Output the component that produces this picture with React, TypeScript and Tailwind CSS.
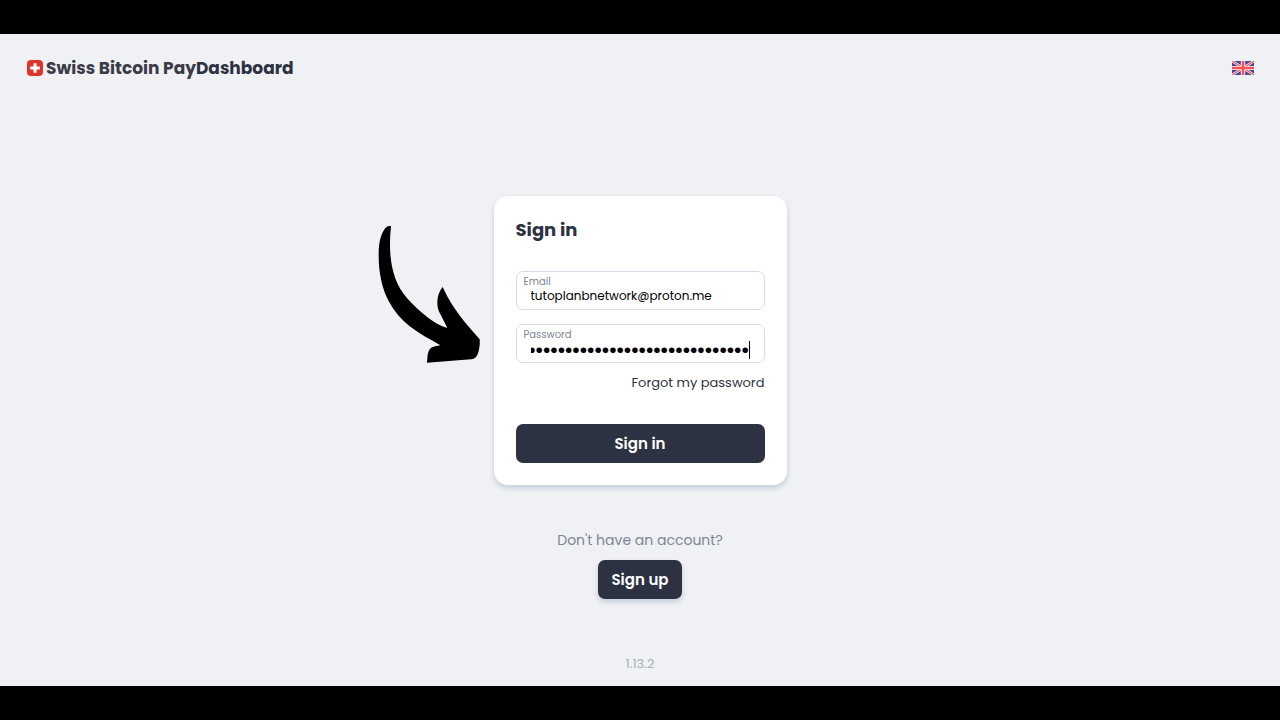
import { useEffect, useRef, useState } from "react";

function SwissLogo() {
  return (
    <svg viewBox="0 0 16 16" className="size-4 shrink-0" aria-hidden="true">
      <rect width="16" height="16" rx="4" fill="#de3529" />
      <path d="M6.5 3.2h3v3.3h3.3v3H9.5v3.3h-3V9.5H3.2v-3h3.3z" fill="#fff" />
    </svg>
  );
}

function UnionFlag() {
  return (
    <svg viewBox="0 0 60 40" className="h-[14px] w-[22px]" preserveAspectRatio="none" aria-hidden="true">
      <clipPath id="flag">
        <rect width="60" height="40" rx="3" />
      </clipPath>
      <g clipPath="url(#flag)">
        <rect width="60" height="40" fill="#41479b" />
        <path d="M0 0l60 40M60 0L0 40" stroke="#f5f5f5" strokeWidth="7" />
        <path d="M0 0l60 40M60 0L0 40" stroke="#ff4b55" strokeWidth="3" />
        <path d="M30 0v40M0 20h60" stroke="#f5f5f5" strokeWidth="12" />
        <path d="M30 0v40M0 20h60" stroke="#ff4b55" strokeWidth="7" />
      </g>
    </svg>
  );
}

function PointerArrow() {
  return (
    <svg
      viewBox="0 0 390 480"
      className="pointer-events-none absolute top-[19px] -left-[129px] h-[160px] w-[130px]"
      aria-hidden="true"
    >
      <path d="M78 34C70 31 63 35 57 45C44 67 41 90 41 120C41 172 50 220 72 260C88 289 109 314 134 334C163 357 196 373 226 391C202 395 196 398 191 409C187 418 187 430 186 443L318 433C331 432 336 425 340 412C344 399 345 385 344 373C304 327 263 283 233 216C222 230 217 245 217 262C217 282 222 290 229 303L247 339C207 328 164 290 125 248C82 199 68 126 78 34Z" />
    </svg>
  );
}

export default function App() {
  const [email, setEmail] = useState("tutoplanbnetwork@proton.me");
  const [password, setPassword] = useState("correct-horse-battery-staple-2024-x");
  const passwordRef = useRef<HTMLInputElement>(null);

  useEffect(() => {
    const field = passwordRef.current;
    if (field) field.scrollLeft = field.scrollWidth;
  }, []);

  return (
    <div className="flex min-h-screen flex-col bg-black py-[34px] font-['Poppins','Inter',sans-serif] text-[#2d3242]">
      <div className="flex grow flex-col bg-[#f0f1f5]">
        <header className="flex items-center justify-between pr-[26px] pl-[27px] py-[22px]">
          <a href="#" className="flex items-center text-[17px] leading-6 font-bold whitespace-nowrap">
            <SwissLogo />
            <span className="ml-[3px] text-[#3b3b48]">Swiss Bitcoin Pay</span>
            <span>Dashboard</span>
          </a>
          <button type="button" aria-label="Language">
            <UnionFlag />
          </button>
        </header>

        <main className="flex grow flex-col items-center pt-[94px]">
          <div className="relative">
            <PointerArrow />
            <form
              onSubmit={(e) => e.preventDefault()}
              className="flex w-[293px] flex-col rounded-[14px] bg-white px-[22px] pt-[22px] pb-[22px] shadow-[0_3px_4px_1px_#cbd5e1]"
            >
              <h1 className="text-lg leading-6 font-bold">Sign in</h1>

              <div className="mt-[29px] flex h-[39px] flex-col rounded-[7px] border border-[#d3dce6] pt-1">
                <label htmlFor="email" className="px-[7px] text-[10px] leading-3 text-[#7b8594]">
                  Email
                </label>
                <input
                  id="email"
                  type="email"
                  value={email}
                  onChange={(e) => setEmail(e.target.value)}
                  className="mx-[14px] h-4 min-w-0 text-xs leading-4 text-black outline-none"
                />
              </div>

              <div className="mt-[14px] flex h-[39px] flex-col rounded-[7px] border border-[#d3dce6] pt-1">
                <label htmlFor="password" className="px-[7px] text-[10px] leading-3 text-[#7b8594]">
                  Password
                </label>
                <div className="mx-[14px] flex h-[18px] items-center border-r border-black">
                  <input
                    ref={passwordRef}
                    id="password"
                    type="password"
                    value={password}
                    onChange={(e) => setPassword(e.target.value)}
                    className="h-4 w-full min-w-0 font-['Liberation_Sans',sans-serif] text-[21px] leading-4 text-black outline-none"
                  />
                </div>
              </div>

              <a href="#" className="mt-[10px] self-end text-[13px] leading-5">
                Forgot my password
              </a>

              <button
                type="submit"
                className="mt-[31px] h-[39px] rounded-[7px] bg-[#2d3242] pt-0.5 text-[15px] font-semibold text-white"
              >
                Sign in
              </button>
            </form>
          </div>

          <p className="mt-[45px] text-sm leading-5 text-[#7b8594]">Don't have an account?</p>
          <button
            type="button"
            className="mt-[10px] h-[39px] rounded-[7px] bg-[#2d3242] px-[13px] pt-0.5 text-[15px] font-semibold text-white shadow-[0_3px_4px_1px_#cbd5e1]"
          >
            Sign up
          </button>
        </main>

        <footer className="pb-3 text-center text-[13px] leading-5 text-[#a5afbd]">1.13.2</footer>
      </div>
    </div>
  );
}
